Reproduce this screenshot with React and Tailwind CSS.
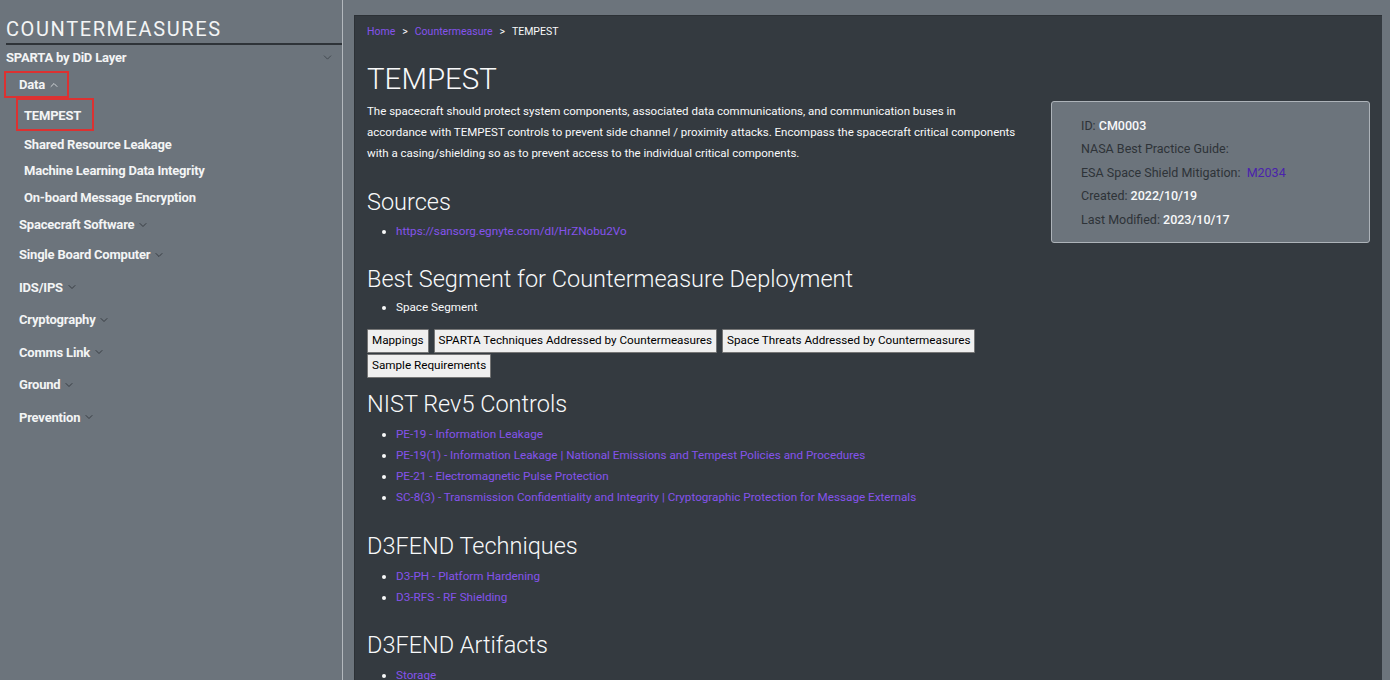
import { ChevronDown, ChevronUp } from "lucide-react";

const LINK = "text-[#8553ec]";

const groups = [
  "Single Board Computer",
  "IDS/IPS",
  "Cryptography",
  "Comms Link",
  "Ground",
  "Prevention",
];

const dataItems = [
  "Shared Resource Leakage",
  "Machine Learning Data Integrity",
  "On-board Message Encryption",
];

const nist = [
  "PE-19 - Information Leakage",
  "PE-19(1) - Information Leakage | National Emissions and Tempest Policies and Procedures",
  "PE-21 - Electromagnetic Pulse Protection",
  "SC-8(3) - Transmission Confidentiality and Integrity | Cryptographic Protection for Message Externals",
];

function Chevron() {
  return <ChevronDown size={12} strokeWidth={2} className="ml-[3px] text-[#383d43]" />;
}

function Sidebar() {
  return (
    <aside className="w-[343px] shrink-0 border-r border-[#b3b8bd] text-[13px] font-bold tracking-[-0.2px] text-[#f3f4f5]">
      <div className="ml-[6px] flex h-[45px] items-end border-b-2 border-[#2e3338] pb-[4px]">
        <span className="text-[20px] font-normal leading-none tracking-[1.6px]">COUNTERMEASURES</span>
      </div>
      <div className="flex h-[25px] items-center justify-between pl-[6px] pr-[8px]">
        <span>SPARTA by DiD Layer</span>
        <ChevronDown size={13} strokeWidth={1.6} className="text-[#3e444a]" />
      </div>
      <div className="ml-[4px] mt-[1px] flex h-[27px] w-[65px] items-center border-2 border-[#dc3131] pl-[13px]">
        <span>Data</span>
        <ChevronUp size={12} strokeWidth={2} className="ml-[3px] text-[#cfd3d6]" />
      </div>
      <div className="ml-[16px] flex h-[33px] w-[78px] items-center border-2 border-[#dc3131] pl-[6px] pt-[3px]">
        TEMPEST
      </div>
      {dataItems.map((t) => (
        <div key={t} className="flex h-[26.5px] items-center pl-[24px]">
          {t}
        </div>
      ))}
      <div className="flex h-[28px] items-center pl-[19px]">
        Spacecraft Software
        <Chevron />
      </div>
      {groups.map((g) => (
        <div key={g} className="flex h-[32.5px] items-center pl-[19px]">
          {g}
          <Chevron />
        </div>
      ))}
    </aside>
  );
}

function Heading({ children, className = "" }) {
  return <h2 className={`text-[23.5px] font-light leading-[29px] text-[#f8f9fa] ${className}`}>{children}</h2>;
}

function Bullets({ items, link = true, className = "" }) {
  return (
    <ul className={`list-disc pl-[29px] text-[11.7px] leading-[21px] text-[#f8f9fa] ${className}`}>
      {items.map((t) => (
        <li key={t}>
          <span className={link ? LINK : ""}>{t}</span>
        </li>
      ))}
    </ul>
  );
}

function InfoCard() {
  const row = "leading-[23.4px]";
  return (
    <div className="h-[142px] rounded-[3px] border border-[#adb3b9] bg-[#6c747c] pl-[29px] pt-[12px] text-[12.5px] text-[#2e3338]">
      <div className={row}>
        ID: <span className="font-medium text-[#f8f9fa]">CM0003</span>
      </div>
      <div className={row}>NASA Best Practice Guide:</div>
      <div className={row}>
        ESA Space Shield Mitigation: <span className="ml-[3px] text-[#4a22ad]">M2034</span>
      </div>
      <div className={row}>
        Created: <span className="font-medium text-[#f8f9fa]">2022/10/19</span>
      </div>
      <div className={row}>
        Last Modified: <span className="font-medium text-[#f8f9fa]">2023/10/17</span>
      </div>
    </div>
  );
}

function Btn({ children }) {
  return (
    <button
      type="button"
      className="h-[24px] rounded-[1px] border border-[#767676] bg-[#efefef] px-[4px] text-[11.7px] text-black"
    >
      {children}
    </button>
  );
}

export default function App() {
  return (
    <div
      className="flex h-[680px] w-[1390px] overflow-hidden bg-[#6c747c]"
      style={{ fontFamily: "Roboto, 'Liberation Sans', sans-serif" }}
    >
      <Sidebar />
      <main className="ml-[11px] mr-[8px] mt-[15px] flex-1 border-l border-t border-[#2c3136] bg-[#343a40] px-[12px] pt-[9px] text-[#f8f9fa]">
        <nav className="flex items-center gap-[7px] text-[10.5px] leading-[14px]">
          <span className={LINK}>Home</span>
          <span>&gt;</span>
          <span className={LINK}>Countermeasure</span>
          <span>&gt;</span>
          <span>TEMPEST</span>
        </nav>
        <h1 className="mt-[22px] text-[29.5px] font-light leading-[36px]">TEMPEST</h1>
        <div className="mt-[4px] flex">
          <div className="w-[669px] shrink-0">
            <p className="text-[11.5px] leading-[21px]">
              The spacecraft should protect system components, associated data communications, and communication buses
              in
              <br />
              accordance with TEMPEST controls to prevent side channel / proximity attacks. Encompass the spacecraft
              critical components
              <br />
              with a casing/shielding so as to prevent access to the individual critical components.
            </p>
            <Heading className="mt-[24px]">Sources</Heading>
            <Bullets className="mt-[4px]" items={["https://sansorg.egnyte.com/dl/HrZNobu2Vo"]} />
          </div>
          <div className="flex-1 pl-[15px]">
            <InfoCard />
          </div>
        </div>
        <Heading className="mt-[22px]">Best Segment for Countermeasure Deployment</Heading>
        <Bullets className="mt-[3px]" link={false} items={["Space Segment"]} />
        <div className="mt-[11px] flex w-[669px] flex-wrap gap-x-[5px] gap-y-[1px]">
          <Btn>Mappings</Btn>
          <Btn>SPARTA Techniques Addressed by Countermeasures</Btn>
          <Btn>Space Threats Addressed by Countermeasures</Btn>
          <Btn>Sample Requirements</Btn>
        </div>
        <Heading className="mt-[12px]">NIST Rev5 Controls</Heading>
        <Bullets className="mt-[5px]" items={nist} />
        <Heading className="mt-[24px]">D3FEND Techniques</Heading>
        <Bullets className="mt-[5px]" items={["D3-PH - Platform Hardening", "D3-RFS - RF Shielding"]} />
        <Heading className="mt-[23px]">D3FEND Artifacts</Heading>
        <Bullets className="mt-[5px]" items={["Storage"]} />
      </main>
    </div>
  );
}
